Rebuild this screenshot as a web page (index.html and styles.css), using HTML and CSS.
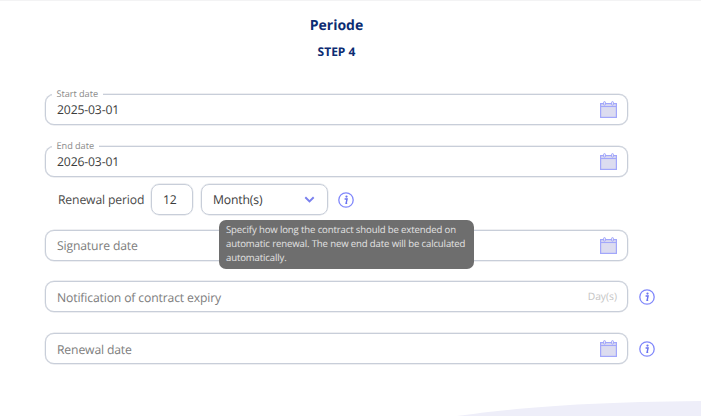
FILE: index.html
```html
<!DOCTYPE html>
<html lang="en">
<head>
<meta charset="utf-8">
<title>Periode</title>
<link rel="stylesheet" href="styles.css">
</head>
<body>
<svg width="0" height="0" class="defs">
  <symbol id="cal" viewBox="0 0 17 17">
    <rect x="0.6" y="2.6" width="15.8" height="13.8" fill="#dcdcf0" stroke="#a2a7fb" stroke-width="1.2"/>
    <path d="M0.6 5.5H16.4" stroke="#a2a7fb" stroke-width="1.1" fill="none"/>
    <rect x="3.5" y="0.6" width="2" height="3.6" rx="1" fill="#e8e8f6" stroke="#a2a7fb"/>
    <rect x="11.5" y="0.6" width="2" height="3.6" rx="1" fill="#e8e8f6" stroke="#a2a7fb"/>
  </symbol>
  <symbol id="info" viewBox="0 0 16 16">
    <circle cx="8" cy="8" r="7.2" fill="#fff" stroke="#8188fb" stroke-width="1.3"/>
    <circle cx="8.5" cy="4.6" r="1.1" fill="#6a72f0"/>
    <path d="M6.6 7h2.5l-1 4.4h1.1" fill="none" stroke="#6a72f0" stroke-width="1.4"/>
  </symbol>
</svg>
<main class="page">
  <h1 class="title">Periode</h1>
  <h2 class="step">STEP 4</h2>
  <form class="form">
    <div class="row">
      <div class="field">
        <span class="legend">Start date</span>
        <span class="value">2025-03-01</span>
        <svg class="cal"><use href="#cal"/></svg>
      </div>
    </div>
    <div class="row">
      <div class="field">
        <span class="legend">End date</span>
        <span class="value">2026-03-01</span>
        <svg class="cal"><use href="#cal"/></svg>
      </div>
    </div>
    <div class="renewal">
      <span class="renewal-label">Renewal period</span>
      <span class="box box-num">12</span>
      <span class="box box-select">Month(s)
        <svg class="chev" viewBox="0 0 12 8"><path d="M1.2 1.4 6 6.2l4.8-4.8" fill="none" stroke="#7a80ee" stroke-width="2.2"/></svg>
      </span>
      <svg class="info info-inline"><use href="#info"/></svg>
      <div class="tooltip">Specify how long the contract should be extended on automatic renewal. The new end date will be calculated automatically.</div>
    </div>
    <div class="row">
      <div class="field">
        <span class="placeholder">Signature date</span>
        <svg class="cal"><use href="#cal"/></svg>
      </div>
    </div>
    <div class="row">
      <div class="field">
        <span class="placeholder">Notification of contract expiry</span>
        <span class="unit">Day(s)</span>
      </div>
      <svg class="info"><use href="#info"/></svg>
    </div>
    <div class="row">
      <div class="field">
        <span class="placeholder">Renewal date</span>
        <svg class="cal"><use href="#cal"/></svg>
      </div>
      <svg class="info"><use href="#info"/></svg>
    </div>
  </form>
</main>
<svg class="blob" viewBox="0 0 244 15" preserveAspectRatio="none"><path d="M0 15C50 8 120 1 244 0V15Z" fill="#eeeef9"/></svg>
</body>
</html>
```
FILE: styles.css
```css
* { box-sizing: border-box; }
html, body { margin: 0; height: 100%; }
body {
  position: relative;
  height: 416px;
  overflow: hidden;
  background: #fff;
  border-top: 1px solid #f3f3f4;
  font-family: "Open Sans", sans-serif;
  color: #3a3a3a;
  text-rendering: geometricPrecision;
}
.defs { position: absolute; }
.page { padding: 15.5px 0 0 45px; }
.title {
  width: 583px;
  margin: 0;
  font-size: 14px;
  line-height: 18px;
  font-weight: 700;
  text-align: center;
  color: #0c2c72;
}
.step {
  width: 583px;
  margin: 9.5px 0 0;
  font-size: 12px;
  line-height: 16px;
  font-weight: 700;
  text-align: center;
  color: #0c2c72;
}
.form { display: flex; flex-direction: column; margin-top: 34px; }
.row { display: flex; align-items: center; gap: 11px; height: 31px; margin-bottom: 20.7px; }
.field {
  position: relative;
  display: flex;
  align-items: center;
  justify-content: space-between;
  width: 583px;
  height: 31px;
  padding: 0 10px 0 11px;
  border: 1px solid #c8ced9;
  box-shadow: 0 0 0 0.4px #dde0e6;
  border-radius: 9px;
  background: #fff;
}
.legend {
  position: absolute;
  left: 6px;
  top: -7px;
  padding: 0 4.5px;
  background: #fff;
  font-size: 9.2px;
  letter-spacing: -0.05px;
  line-height: 12px;
  color: #8a8a8a;
}
.value { font-size: 12.2px; letter-spacing: -0.15px; color: #3c3c3c; }
.placeholder { padding-top: 1px; font-size: 12.2px; letter-spacing: -0.15px; color: #7d7d7d; }
.unit { font-size: 10.3px; color: #c4c4c4; }
.cal { width: 17px; height: 17px; }
.info { width: 16px; height: 16px; flex: none; }
.renewal {
  position: relative;
  z-index: 1;
  display: flex;
  align-items: center;
  height: 31px;
  margin: -13px 0 14.3px;
  padding-left: 13px;
}
.renewal-label { width: 93px; flex: none; white-space: nowrap; font-size: 12.2px; letter-spacing: -0.15px; color: #4a4a4a; }
.box {
  display: flex;
  align-items: center;
  height: 31px;
  border: 1px solid #c8ced9;
  box-shadow: 0 0 0 0.4px #dde0e6;
  border-radius: 8px;
  font-size: 12.2px;
  letter-spacing: -0.15px;
  color: #3c3c3c;
}
.box-num { width: 42px; padding-left: 11px; margin-right: 8px; }
.box-select { width: 127px; padding: 0 12px 0 11px; justify-content: space-between; margin-right: 10px; }
.chev { width: 11px; height: 7px; }
.tooltip {
  position: absolute;
  left: 174px;
  top: 35.5px;
  width: 255px;
  height: 49px;
  padding: 3.5px 3px 3.5px 7px;
  border-radius: 7px;
  background: #6e6e6e;
  font-size: 9.6px;
  letter-spacing: -0.14px;
  line-height: 14px;
  color: #e2e2e2;
}
.blob { position: absolute; right: 0; bottom: 0; width: 244px; height: 15px; }
```
